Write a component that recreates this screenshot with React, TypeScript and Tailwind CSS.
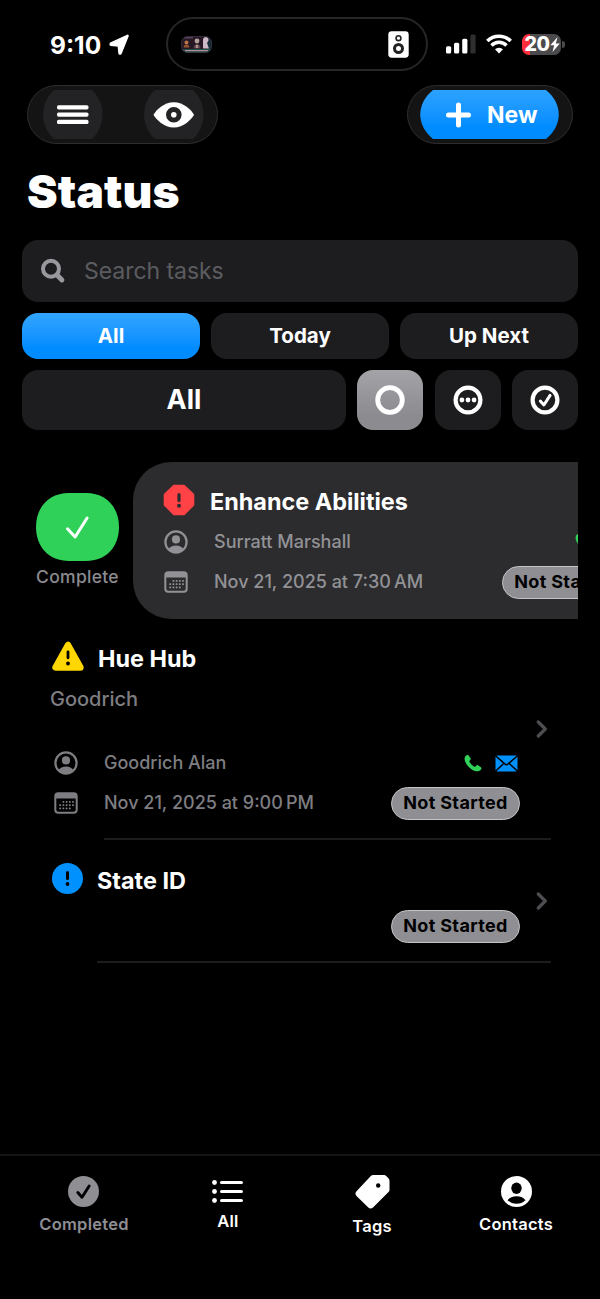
import type { ReactNode } from "react";

function LocationArrow() {
  return (
    <svg className="h-[21px] w-[21px]" viewBox="0 0 21 21" fill="#fff" stroke="#fff" strokeWidth="2.4" strokeLinejoin="round">
      <path d="M18.600 1.800 1.700 9.700v1l8 .8.8 8h1z" />
    </svg>
  );
}

function MediaThumb() {
  return (
    <svg className="h-[17px] w-[31px]" viewBox="0 0 31 17">
      <defs>
        <clipPath id="thumb">
          <rect width="31" height="17" rx="7" />
        </clipPath>
      </defs>
      <g clipPath="url(#thumb)">
        <rect width="31" height="17" fill="#251723" />
        <rect x="3" y="1" width="9" height="1.500" fill="#58405a" />
        <rect x="25" y="3" width="6" height="10" fill="#152c38" />
        <circle cx="5.500" cy="6.500" r="2" fill="#b8754a" />
        <path d="M2.500 11.500c0-4 6-4 6 0z" fill="#96552f" />
        <circle cx="16" cy="5" r="2.400" fill="#b5a1a0" />
        <path d="M12.500 12.500c0-6 7-6 7 0z" fill="#57434e" />
        <path d="M14.800 9h2.400v3h-2.400z" fill="#b58d88" />
        <path d="M22 4c0-4 6-4 5.500.5L26 7l2 5.500h-6z" fill="#cdb8c8" />
        <rect y="13" width="31" height="4" fill="#20504c" />
        <rect x="4" y="14" width="23" height="1.200" fill="#b78d95" />
      </g>
      <rect x=".5" y=".5" width="30" height="16" rx="6.500" fill="none" stroke="#3a3040" strokeWidth=".8" />
    </svg>
  );
}

function Speaker() {
  return (
    <svg className="h-[27px] w-[21px]" viewBox="0 0 21 27">
      <rect x=".3" y=".3" width="20.400" height="26.400" rx="3.400" fill="#fff" />
      <circle cx="10.500" cy="7.200" r="2.400" fill="none" stroke="#222" strokeWidth="1.600" />
      <circle cx="10.500" cy="17.500" r="4" fill="none" stroke="#222" strokeWidth="3" />
    </svg>
  );
}

function Signal() {
  return (
    <svg className="h-[20px] w-[30px]" viewBox="0 0 30 20" fill="#fff">
      <rect x="0" y="12.2" width="5.2" height="7.2" rx="1.5" />
      <rect x="8" y="8.8" width="5.2" height="10.6" rx="1.5" />
      <rect x="16.2" y="4.8" width="5.2" height="14.6" rx="1.5" />
      <rect x="24.4" y=".5" width="5.2" height="18.9" rx="1.5" fill="#2f2f31" />
    </svg>
  );
}

function Wifi() {
  return (
    <svg className="h-[20px] w-[26px]" viewBox="0 0 26 20" fill="none" stroke="#fff" strokeWidth="3.5">
      <path d="M1.3 7.1a16.7 16.7 0 0 1 23.4 0" />
      <path d="M5.5 11.4a10.7 10.7 0 0 1 15 0" />
      <path d="M13 19.4l-4-4.1a5.8 5.8 0 0 1 8 0z" fill="#fff" stroke="none" />
    </svg>
  );
}

function Battery() {
  return (
    <div className="flex items-center">
      <div className="flex h-[21px] w-[39px] items-center justify-center rounded-[7px] bg-[linear-gradient(90deg,#fb2f3a_0,#fb2f3a_8px,#4b4b4d_8px)] pl-[1px]">
        <span className="text-[19.5px] leading-[21px] font-extrabold tracking-[-0.4px]">20</span>
        <svg className="h-[15px] w-[10px]" viewBox="0 0 10 15" fill="#fff">
          <path d="M7.600 0 .3 8.300h3.900L2.500 15l7.300-8.500H5.800z" />
        </svg>
      </div>
      <div className="ml-[1px] h-[7px] w-[3px] rounded-r-full bg-[#4b4b4d]" />
    </div>
  );
}

function StatusBar() {
  return (
    <div className="flex h-[85px] items-start pt-[17px]">
      <div className="flex h-[54px] w-[166px] items-center gap-[5px] pl-[50px]">
        <span className="w-[54px] pt-[1px] text-[24.5px] leading-[30px] font-bold whitespace-nowrap">9:10</span>
        <LocationArrow />
      </div>
      <div className="flex h-[54px] w-[262px] items-center justify-between rounded-full border-2 border-[#262626] pr-[17px] pl-[13px]">
        <MediaThumb />
        <Speaker />
      </div>
      <div className="flex h-[54px] items-center pl-[18px]">
        <Signal />
        <div className="ml-[10px]"><Wifi /></div>
        <div className="ml-[10px]"><Battery /></div>
      </div>
    </div>
  );
}

function Toolbar() {
  return (
    <div className="flex h-[59px] justify-between pr-[27px] pl-[27px]">
      <div className="flex h-[59px] w-[191px] items-center justify-between rounded-full border border-[#2e2e2e] bg-[#141414] pr-[13px] pl-[15px]">
        <svg className="h-[49px] w-[60px]" viewBox="0 0 60 49">
          <path d="M11 0h38c14 13 14 36 0 49H11C-3.500 36-3.500 13 11 0z" fill="#232325" />
          <g fill="#fff">
            <rect x="14" y="15.200" width="31.500" height="4.200" rx="1.600" />
            <rect x="14" y="22.500" width="31.500" height="4.200" rx="1.600" />
            <rect x="14" y="29.800" width="31.500" height="4.200" rx="1.600" />
          </g>
        </svg>
        <svg className="h-[49px] w-[60px]" viewBox="0 0 60 49">
          <path d="M11 0h38c14 13 14 36 0 49H11C-3.500 36-3.500 13 11 0z" fill="#232325" />
          <path d="M9.500 24.800C12 20 20 12.200 29.800 12.200S47.500 20 50 24.800C47.500 29.500 39.500 37.600 29.800 37.600S12 29.500 9.500 24.800z" fill="#fff" />
          <circle cx="29.800" cy="24.800" r="5.300" fill="none" stroke="#232325" strokeWidth="5" />
        </svg>
      </div>
      <div className="flex h-[59px] w-[166px] items-center rounded-full border border-[#2e2e2e] bg-[#141414] pl-[12px]">
        <div className="flex h-[49px] w-[139px] items-center bg-linear-to-b from-[#2ba2ff] to-[#008cff] to-75% pl-[25px] [clip-path:path('M13_0H126C143_14_143_35_126_49H13C-4_35_-4_14_13_0Z')]">
          <svg className="h-[26px] w-[26px]" viewBox="0 0 26 26" stroke="#fff" strokeWidth="5" strokeLinecap="round">
            <path d="M13.500 3v20M3.500 13h20" />
          </svg>
          <span className="ml-[16px] text-[23px] leading-[30px] font-bold">New</span>
        </div>
      </div>
    </div>
  );
}

function Filters() {
  const icon = "flex h-[60px] w-[66px] items-center justify-center rounded-[16px]";
  return (
    <div className="flex flex-col gap-[11px] px-[22px]">
      <div className="flex h-[62px] items-center rounded-[16px] bg-[#1d1d1f] pl-[18px]">
        <svg className="h-[26px] w-[26px]" viewBox="0 0 26 26" fill="none" stroke="#98989d" strokeLinecap="round">
          <circle cx="11" cy="10.800" r="8" strokeWidth="4" />
          <path d="M17.300 17.300l4.600 4.600" strokeWidth="5" />
        </svg>
        <span className="ml-[18px] text-[23px] leading-[30px] tracking-[-0.05px] text-[#5c5c60]">Search tasks</span>
      </div>
      <div className="flex gap-[11px] text-[20.5px] leading-[30px] font-bold">
        <div className="flex h-[46px] flex-1 items-center justify-center rounded-[16px] bg-linear-to-b from-[#31a5ff] to-[#008cff] to-75%">All</div>
        <div className="flex h-[46px] flex-1 items-center justify-center rounded-[16px] bg-[#1d1d1f]">Today</div>
        <div className="flex h-[46px] flex-1 items-center justify-center rounded-[16px] bg-[#1d1d1f]">Up Next</div>
      </div>
      <div className="flex justify-between">
        <div className="flex h-[60px] w-[324px] items-center justify-center rounded-[16px] bg-[#1d1d1f] text-[27px] leading-[34px] font-bold">All</div>
        <div className={`${icon} bg-linear-to-b from-[#a4a4a8] to-[#8c8c90] to-75%`}>
          <svg className="h-[30px] w-[30px]" viewBox="0 0 30 30" fill="none" stroke="#fff" strokeWidth="4.800">
            <circle cx="15" cy="15" r="12.300" />
          </svg>
        </div>
        <div className={`${icon} bg-[#1d1d1f]`}>
          <svg className="h-[30px] w-[30px]" viewBox="0 0 30 30" fill="#fff">
            <circle cx="15" cy="15" r="12.400" fill="none" stroke="#fff" strokeWidth="4.200" />
            <circle cx="8.900" cy="15" r="2.400" />
            <circle cx="15" cy="15" r="2.400" />
            <circle cx="21.100" cy="15" r="2.400" />
          </svg>
        </div>
        <div className={`${icon} bg-[#1d1d1f]`}>
          <svg className="h-[30px] w-[30px]" viewBox="0 0 30 30" fill="none" stroke="#fff" strokeLinecap="round" strokeLinejoin="round">
            <circle cx="15" cy="15" r="12.400" strokeWidth="4.200" />
            <path d="M10.300 16l3.600 4 6.200-9.600" strokeWidth="3" />
          </svg>
        </div>
      </div>
    </div>
  );
}

type Priority = "high" | "medium" | "low";

function PriorityIcon({ level }: { level: Priority }) {
  if (level === "high") {
    return (
      <svg className="mr-[15px] ml-[1px] h-[32px] w-[32px]" viewBox="0 0 32 32">
        <path d="M11.200 2h9.600l9.200 8.800v10l-9.200 9.200h-9.600L2 20.800v-10z" fill="#ff4245" stroke="#ff4245" strokeWidth="2.600" strokeLinejoin="round" />
        <path d="M16 10.600v6" stroke="#2c2c2e" strokeWidth="3.200" strokeLinecap="round" />
        <circle cx="16" cy="21.800" r="2" fill="#2c2c2e" />
      </svg>
    );
  }
  if (level === "medium") {
    return (
      <svg className="mr-[14px] h-[32px] w-[32px]" viewBox="0 0 32 32">
        <path d="M16 4 3.600 26.400h24.800z" fill="#ffd600" stroke="#ffd600" strokeWidth="6.500" strokeLinejoin="round" />
        <path d="M16 10.800v6" stroke="#000" strokeWidth="2.800" strokeLinecap="round" />
        <circle cx="16" cy="22.500" r="1.900" fill="#000" />
      </svg>
    );
  }
  return (
    <svg className="mr-[13px] h-[32px] w-[32px]" viewBox="0 0 32 32">
      <circle cx="15.500" cy="15.500" r="15.500" fill="#0091ff" />
      <path d="M15.500 9.500v6" stroke="#000" strokeWidth="3" strokeLinecap="round" />
      <circle cx="15.500" cy="21" r="1.900" fill="#000" />
    </svg>
  );
}

function PersonIcon() {
  return (
    <svg className="h-[24px] w-[24px]" viewBox="0 0 24 24">
      <circle cx="12" cy="12" r="10.600" fill="none" stroke="currentColor" strokeWidth="2.200" />
      <circle cx="12" cy="9.400" r="4.100" fill="currentColor" />
      <path d="M4.200 19.400c1.700-2.700 4.500-4 7.800-4s6.100 1.300 7.800 4c-2 2.200-4.700 3.600-7.800 3.600s-5.800-1.400-7.800-3.600z" fill="currentColor" />
    </svg>
  );
}

function CalendarIcon() {
  const dots = [
    [9.4, 9.8], [12.6, 9.8], [15.8, 9.8], [19, 9.8],
    [6.2, 13.1], [9.4, 13.1], [12.6, 13.1], [15.8, 13.1], [19, 13.1],
    [6.2, 16.400], [9.4, 16.400], [12.6, 16.400], [15.8, 16.400],
  ];
  return (
    <svg className="h-[22px] w-[24px]" viewBox="0 0 24 22">
      <rect x="1.300" y="1.300" width="21.400" height="19.400" rx="3" fill="none" stroke="currentColor" strokeWidth="2" />
      <path d="M1.500 3.500a2 2 0 0 1 2-2h17a2 2 0 0 1 2 2V6.400h-21z" fill="currentColor" />
      {dots.map(([x, y]) => (
        <rect key={`${x}-${y}`} x={x - 0.9} y={y - 0.9} width="1.800" height="1.800" rx=".5" fill="currentColor" />
      ))}
    </svg>
  );
}

function PhoneIcon() {
  return (
    <svg className="h-[18px] w-[18px]" viewBox="0 0 18 18" fill="#30d158">
      <path d="M3.200 1C1.600 1.300.5 3 .6 5c.2 3 2.300 6.200 4.700 8.500 2.300 2.200 5 3.700 7.500 3.800 2 .1 3.700-.9 4.500-2.300.4-.7.200-1.300-.4-1.800l-2.600-1.800c-.7-.5-1.400-.4-1.900.2l-.9 1c-.3.4-.7.400-1.100.2-1.900-1.100-4-3.200-5-5-.2-.4-.200-.8.200-1.100l.7-.7c.6-.6.6-1.100.2-1.800L4.900 1.700C4.500 1.100 4 .8 3.200 1z" />
    </svg>
  );
}

function MailIcon({ gap }: { gap: string }) {
  return (
    <svg className="h-[17px] w-[23px]" viewBox="0 0 23 17">
      <rect x=".5" y=".5" width="22" height="16" rx="2" fill="#0091ff" />
      <path d="M1 1.300l8.800 7.600c1 .9 2.400.9 3.400 0L22 1.300M1 15.800l7.500-7M22 15.800l-7.500-7" fill="none" stroke={gap} strokeWidth="1.500" />
    </svg>
  );
}

function Badge() {
  return (
    <div className="flex h-[33px] w-[129px] items-center justify-center rounded-full border border-[#c4c4c7] bg-[#8e8e93] text-[18px] leading-[24px] font-bold tracking-[0.35px] whitespace-nowrap text-black">
      Not Started
    </div>
  );
}

function MetaLine({ icon, children, trailing }: { icon?: ReactNode; children?: ReactNode; trailing?: ReactNode }) {
  return (
    <div className="flex h-[40px] items-center pl-[2px]">
      <div className="flex w-[50px] shrink-0">{icon}</div>
      <div className="flex-1 text-[18px] leading-[24px] font-medium whitespace-nowrap">{children}</div>
      {trailing}
    </div>
  );
}

function Title({ level, children }: { level: Priority; children: ReactNode }) {
  return (
    <div className="flex h-[40px] items-center">
      <div className="-mt-[4px]"><PriorityIcon level={level} /></div>
      <h2 className="text-[23.400px] leading-[30px] font-bold whitespace-nowrap text-white">{children}</h2>
    </div>
  );
}

function Contact({ gap }: { gap: string }) {
  return (
    <div className="flex items-center gap-[13px] pr-[2px]">
      <PhoneIcon />
      <MailIcon gap={gap} />
    </div>
  );
}

function Chevron() {
  return (
    <svg className="h-[18px] w-[12px]" viewBox="0 0 12 18" fill="none" stroke="#4e4e52" strokeWidth="3.200" strokeLinecap="round" strokeLinejoin="round">
      <path d="M2.300 2l7 7-7 7" />
    </svg>
  );
}

function TaskList() {
  return (
    <div className="mx-[22px] mt-[32px] flex flex-col">
      <div className="flex h-[157px] overflow-hidden">
        <div className="flex w-[111px] shrink-0 flex-col items-center pt-[31px]">
          <svg className="h-[68px] w-[83px]" viewBox="0 0 83 68">
            <path d="M33 0h17c20 0 33 14 33 34S70 68 50 68H33C13 68 0 54 0 34S13 0 33 0z" fill="#30d158" />
            <path d="M31.500 35.800l7.600 8.200 12-19" fill="none" stroke="#fff" strokeWidth="3" strokeLinecap="round" strokeLinejoin="round" />
          </svg>
          <span className="mt-[4px] text-[17.500px] leading-[24px] font-medium tracking-[0.3px] text-[#8b8b90]">Complete</span>
        </div>
        <div className="h-[157px] w-[556px] shrink-0 rounded-[38px] bg-[#2c2c2e] pt-[20px] pl-[29px] text-[#929296]">
          <div className="w-[469px]">
            <Title level="high">Enhance Abilities</Title>
            <MetaLine icon={<PersonIcon />} trailing={<Contact gap="#2c2c2e" />}>Surratt Marshall</MetaLine>
            <MetaLine icon={<CalendarIcon />} trailing={<Badge />}>Nov 21, 2025 at 7:30{"\u202f"}AM</MetaLine>
          </div>
        </div>
      </div>

      <div className="flex h-[219px] items-center text-[#7e7e82]">
        <div className="ml-[30px] h-[219px] w-[468px] pt-[20px]">
          <Title level="medium">Hue Hub</Title>
          <p className="-ml-[2px] h-[40px] text-[20px] leading-[40px] font-medium">Goodrich</p>
          <div className="mt-[24px]">
            <MetaLine icon={<PersonIcon />} trailing={<Contact gap="#000" />}>Goodrich Alan</MetaLine>
            <MetaLine icon={<CalendarIcon />} trailing={<Badge />}>Nov 21, 2025 at 9:00{"\u202f"}PM</MetaLine>
          </div>
        </div>
        <div className="pl-[16px]"><Chevron /></div>
      </div>
      <div className="mr-[27px] ml-[82px] h-[2px] bg-[#1c1c1e]" />

      <div className="flex h-[121px] items-center">
        <div className="ml-[30px] h-[121px] w-[468px] pt-[21px]">
          <Title level="low">State ID</Title>
          <div className="mt-[5px]"><MetaLine trailing={<Badge />} /></div>
        </div>
        <div className="pl-[16px]"><Chevron /></div>
      </div>
      <div className="mr-[27px] ml-[75px] h-[2px] bg-[#1c1c1e]" />
    </div>
  );
}

function Tab({ icon, label, className }: { icon: ReactNode; label: string; className: string }) {
  return (
    <div className={`flex w-[144px] flex-col items-center text-[16.500px] leading-[22px] font-semibold tracking-[0.25px] ${className}`}>
      {icon}
      <span>{label}</span>
    </div>
  );
}

function TabBar() {
  return (
    <nav className="mt-[191px] flex h-[145px] justify-center border-t-2 border-[#141414]">
      <Tab
        label="Completed"
        className="gap-[6px] pt-[20px] text-[#8e8e93]"
        icon={
          <svg className="mr-[1px] h-[31px] w-[31px]" viewBox="0 0 31 31">
            <circle cx="15.500" cy="15.500" r="15.500" fill="#8e8e93" />
            <path d="M9.800 16.500l4.200 4.700 7.200-11.200" fill="none" stroke="#000" strokeWidth="2.900" strokeLinecap="round" strokeLinejoin="round" />
          </svg>
        }
      />
      <Tab
        label="All"
        className="gap-[6px] pt-[24px] text-white"
        icon={
          <svg className="mr-[1px] h-[24px] w-[31px]" viewBox="0 0 31 24" fill="#fff">
            {[2.500, 11.500, 20.500].map((y) => (
              <g key={y}>
                <circle cx="2.500" cy={y} r="2.400" />
                <rect x="8" y={y - 1.600} width="23" height="3.200" rx="1.600" />
              </g>
            ))}
          </svg>
        }
      />
      <Tab
        label="Tags"
        className="gap-[6px] pt-[18px] text-white"
        icon={
          <svg className="h-[35px] w-[35px]" viewBox="0 0 35 35">
            <path d="M18.200 1h10.300c1.200 0 1.900.3 2.700 1.100l2.200 2.200c.8.8 1.100 1.500 1.100 2.700v8.800c0 1-.3 1.600-1 2.300L18 33.400c-1.500 1.500-3.200 1.500-4.700 0L1.500 21.900c-1.400-1.400-1.400-3.300 0-4.700L15.800 2c.7-.7 1.400-1 2.400-1z" fill="#fff" />
            <circle cx="23.200" cy="11.500" r="2.200" fill="#000" />
          </svg>
        }
      />
      <Tab
        label="Contacts"
        className="gap-[6px] pt-[20px] text-white"
        icon={
          <svg className="h-[31px] w-[31px]" viewBox="0 0 31 31">
            <circle cx="15.500" cy="15.500" r="15.500" fill="#fff" />
            <ellipse cx="15.500" cy="12.200" rx="5.200" ry="5.700" fill="#000" />
            <path d="M6.600 24.200c1.600-2.400 4.800-3.900 8.900-3.900s7.300 1.500 8.900 3.900c-2.300 2.300-5.400 3.600-8.900 3.600s-6.600-1.300-8.900-3.600z" fill="#000" />
          </svg>
        }
      />
    </nav>
  );
}

export default function App() {
  return (
    <div className="flex h-[1299px] w-[600px] flex-col overflow-hidden bg-black font-['Inter',sans-serif] text-white">
      <StatusBar />
      <Toolbar />
      <h1 className="h-[96px] pt-[19px] pl-[27px] text-[46px] leading-[56px] font-black tracking-[0.1px]">Status</h1>
      <Filters />
      <TaskList />
      <TabBar />
    </div>
  );
}
